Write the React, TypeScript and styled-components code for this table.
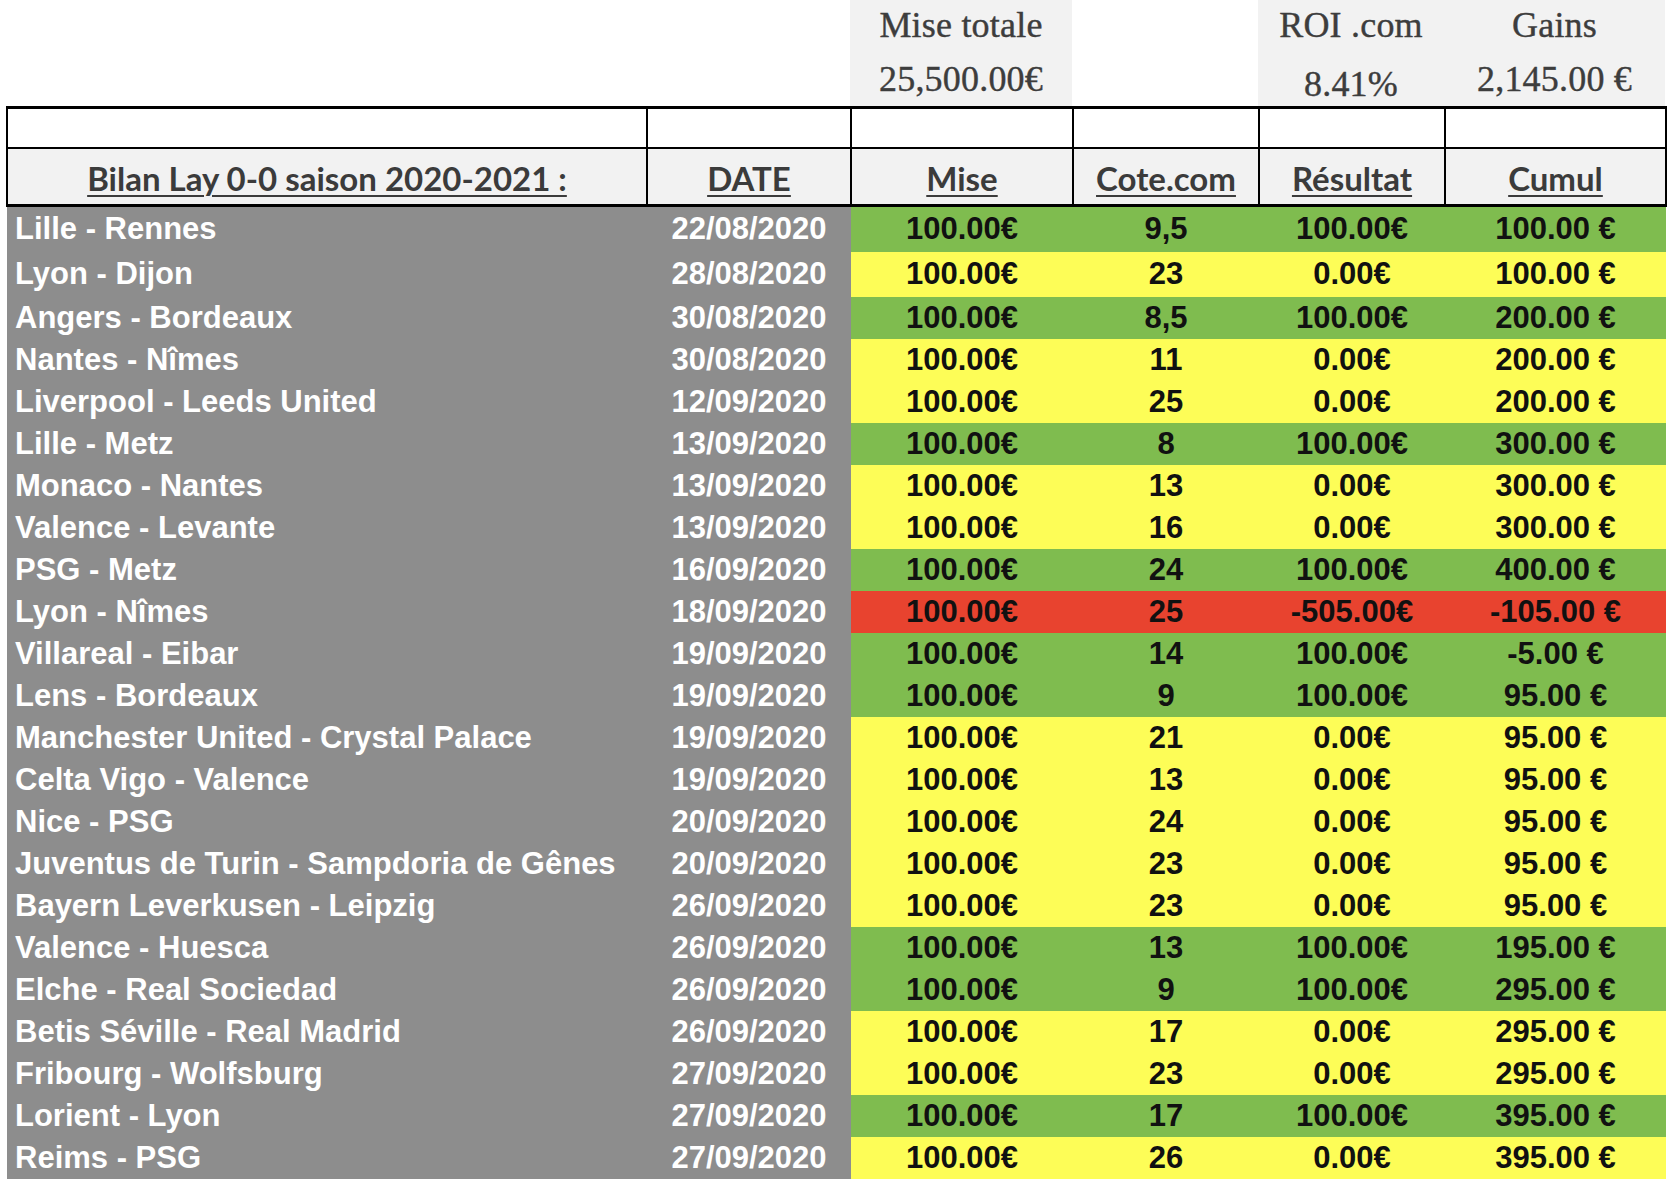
import React, { FC } from 'react'
import styled, { createGlobalStyle } from 'styled-components'

type Outcome = 'win' | 'void' | 'loss'

interface Bet {
    match: string
    date: string
    cote: string
    resultat: string
    cumul: string
    outcome: Outcome
}

const bets: Bet[] = [
    { match: 'Lille - Rennes', date: '22/08/2020', cote: '9,5', resultat: '100.00€', cumul: '100.00 €', outcome: 'win' },
    { match: 'Lyon - Dijon', date: '28/08/2020', cote: '23', resultat: '0.00€', cumul: '100.00 €', outcome: 'void' },
    { match: 'Angers - Bordeaux', date: '30/08/2020', cote: '8,5', resultat: '100.00€', cumul: '200.00 €', outcome: 'win' },
    { match: 'Nantes - Nîmes', date: '30/08/2020', cote: '11', resultat: '0.00€', cumul: '200.00 €', outcome: 'void' },
    { match: 'Liverpool - Leeds United', date: '12/09/2020', cote: '25', resultat: '0.00€', cumul: '200.00 €', outcome: 'void' },
    { match: 'Lille - Metz', date: '13/09/2020', cote: '8', resultat: '100.00€', cumul: '300.00 €', outcome: 'win' },
    { match: 'Monaco - Nantes', date: '13/09/2020', cote: '13', resultat: '0.00€', cumul: '300.00 €', outcome: 'void' },
    { match: 'Valence - Levante', date: '13/09/2020', cote: '16', resultat: '0.00€', cumul: '300.00 €', outcome: 'void' },
    { match: 'PSG - Metz', date: '16/09/2020', cote: '24', resultat: '100.00€', cumul: '400.00 €', outcome: 'win' },
    { match: 'Lyon - Nîmes', date: '18/09/2020', cote: '25', resultat: '-505.00€', cumul: '-105.00 €', outcome: 'loss' },
    { match: 'Villareal - Eibar', date: '19/09/2020', cote: '14', resultat: '100.00€', cumul: '-5.00 €', outcome: 'win' },
    { match: 'Lens - Bordeaux', date: '19/09/2020', cote: '9', resultat: '100.00€', cumul: '95.00 €', outcome: 'win' },
    { match: 'Manchester United - Crystal Palace', date: '19/09/2020', cote: '21', resultat: '0.00€', cumul: '95.00 €', outcome: 'void' },
    { match: 'Celta Vigo - Valence', date: '19/09/2020', cote: '13', resultat: '0.00€', cumul: '95.00 €', outcome: 'void' },
    { match: 'Nice - PSG', date: '20/09/2020', cote: '24', resultat: '0.00€', cumul: '95.00 €', outcome: 'void' },
    { match: 'Juventus de Turin - Sampdoria de Gênes', date: '20/09/2020', cote: '23', resultat: '0.00€', cumul: '95.00 €', outcome: 'void' },
    { match: 'Bayern Leverkusen - Leipzig', date: '26/09/2020', cote: '23', resultat: '0.00€', cumul: '95.00 €', outcome: 'void' },
    { match: 'Valence - Huesca', date: '26/09/2020', cote: '13', resultat: '100.00€', cumul: '195.00 €', outcome: 'win' },
    { match: 'Elche - Real Sociedad', date: '26/09/2020', cote: '9', resultat: '100.00€', cumul: '295.00 €', outcome: 'win' },
    { match: 'Betis Séville - Real Madrid', date: '26/09/2020', cote: '17', resultat: '0.00€', cumul: '295.00 €', outcome: 'void' },
    { match: 'Fribourg - Wolfsburg', date: '27/09/2020', cote: '23', resultat: '0.00€', cumul: '295.00 €', outcome: 'void' },
    { match: 'Lorient - Lyon', date: '27/09/2020', cote: '17', resultat: '100.00€', cumul: '395.00 €', outcome: 'win' },
    { match: 'Reims - PSG', date: '27/09/2020', cote: '26', resultat: '0.00€', cumul: '395.00 €', outcome: 'void' },
]

const outcomeColors: Record<Outcome, string> = {
    win: '#7fbc4f',
    void: '#fdfd57',
    loss: '#e8432f',
}

// first rows of the sheet are a bit taller
const rowHeight = (i: number) => (i === 0 ? 46 : i === 1 ? 45 : 42)

const COLS = '640px 204px 222px 186px 186px 221px'

const App: FC = () => {
    return (
        <>
            <GlobalStyle />
            <Page>
                <Summary>
                    <Blank />
                    <Blank />
                    <SummaryCell>
                        <SummaryLabel>Mise totale</SummaryLabel>
                        <SummaryValue>25,500.00€</SummaryValue>
                    </SummaryCell>
                    <Blank />
                    <SummaryCell>
                        <SummaryLabel>ROI .com</SummaryLabel>
                        <SummaryValue $drop={10}>8.41%</SummaryValue>
                    </SummaryCell>
                    <SummaryCell>
                        <SummaryLabel>Gains</SummaryLabel>
                        <SummaryValue>2,145.00 €</SummaryValue>
                    </SummaryCell>
                </Summary>
                <Sheet>
                    <colgroup>
                        <col style={{ width: 640 }} />
                        <col style={{ width: 204 }} />
                        <col style={{ width: 222 }} />
                        <col style={{ width: 186 }} />
                        <col style={{ width: 186 }} />
                        <col style={{ width: 221 }} />
                    </colgroup>
                    <thead>
                        <tr>
                            <EmptyHead />
                            <EmptyHead />
                            <EmptyHead />
                            <EmptyHead />
                            <EmptyHead />
                            <EmptyHead />
                        </tr>
                        <tr>
                            <HeadCell><u>Bilan Lay 0-0 saison 2020-2021 :</u></HeadCell>
                            <HeadCell><u>DATE</u></HeadCell>
                            <HeadCell><u>Mise</u></HeadCell>
                            <HeadCell><u>Cote.com</u></HeadCell>
                            <HeadCell><u>Résultat</u></HeadCell>
                            <HeadCell><u>Cumul</u></HeadCell>
                        </tr>
                    </thead>
                    <tbody>
                        {bets.map((bet, i) => (
                            <tr key={i} style={{ height: rowHeight(i) }}>
                                <MatchCell>{bet.match}</MatchCell>
                                <DateCell>{bet.date}</DateCell>
                                <ValueCell $outcome={bet.outcome}>100.00€</ValueCell>
                                <ValueCell $outcome={bet.outcome}>{bet.cote}</ValueCell>
                                <ValueCell $outcome={bet.outcome}>{bet.resultat}</ValueCell>
                                <ValueCell $outcome={bet.outcome}>{bet.cumul}</ValueCell>
                            </tr>
                        ))}
                    </tbody>
                </Sheet>
            </Page>
        </>
    )
}

const GlobalStyle = createGlobalStyle`
    body {
        margin: 0;
        background: #fff;
    }
`
const Page = styled.div`
    width: 1668px;
    padding-left: 6px;
    box-sizing: border-box;
`
const Summary = styled.div`
    display: grid;
    grid-template-columns: ${COLS};
    grid-template-rows: 106px;
    height: 106px;
    overflow: hidden;
`
const Blank = styled.div`
    background: #fff;
`
const SummaryCell = styled.div`
    display: grid;
    grid-template-rows: 52px 54px;
    background: #f2f2f2;
    text-align: center;
    font-family: "Liberation Serif", "Times New Roman", serif;
    font-size: 36px;
    letter-spacing: 0.2px;
    color: #3d3d3d;
    -webkit-text-stroke: 0.4px #3d3d3d;
    overflow: hidden;
`
const SummaryLabel = styled.div`
    line-height: 50px;
`
const SummaryValue = styled.div<{ $drop?: number }>`
    padding-top: ${p => p.$drop || 0}px;
    line-height: ${p => 54 - (p.$drop || 0)}px;
`
const Sheet = styled.table`
    width: 1659px;
    table-layout: fixed;
    border-collapse: collapse;
    border-spacing: 0;
    border-top: 3px solid #000;
`
const EmptyHead = styled.td`
    height: 38px;
    border: 2px solid #000;
    background: #fff;
    padding: 0;
`
const HeadCell = styled.th`
    height: 52px;
    border: 2px solid #000;
    border-bottom-width: 3px;
    background: #f2f2f2;
    padding: 3px 0 0;
    font-family: Lato, "Open Sans", sans-serif;
    font-weight: 700;
    font-size: 33px;
    color: #3b3b3b;
    text-align: center;
    vertical-align: middle;
    white-space: nowrap;
    u {
        text-decoration-thickness: 2px;
        text-underline-offset: 4px;
    }
`
const Cell = styled.td`
    padding: 0;
    font-family: "Liberation Sans", Arial, sans-serif;
    font-weight: 700;
    font-size: 31px;
    white-space: nowrap;
    vertical-align: middle;
`
const MatchCell = styled(Cell)`
    background: #8d8d8d;
    color: #fff;
    text-align: left;
    padding-left: 8px;
`
const DateCell = styled(Cell)`
    background: #8d8d8d;
    color: #fff;
    text-align: center;
`
const ValueCell = styled(Cell)<{ $outcome: Outcome }>`
    background: ${p => outcomeColors[p.$outcome]};
    color: #111;
    text-align: center;
`

export default App
